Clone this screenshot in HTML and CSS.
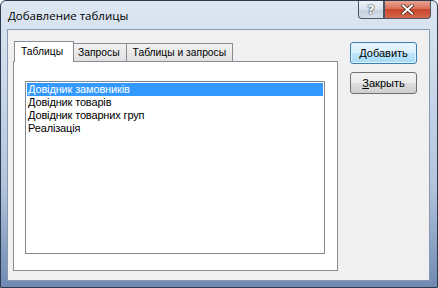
FILE: index.html
```html
<!DOCTYPE html>
<html lang="ru">
<head>
    <meta charset="UTF-8">
    <title>Добавление таблицы</title>
    <link rel="stylesheet" href="styles.css">
</head>
<body>
    <div class="window">
        <div class="titlebar">
            <span class="caption">Добавление таблицы</span>
            <div class="caption-buttons">
                <button class="help">?</button>
                <button class="close">
                    <svg width="13" height="11" viewBox="0 0 13 11">
                        <path d="M2 1.5 L11 9.5 M11 1.5 L2 9.5" stroke="#3a1a16" stroke-width="3.4" stroke-linecap="square"/>
                        <path d="M2 1.5 L11 9.5 M11 1.5 L2 9.5" stroke="#fff" stroke-width="2" stroke-linecap="square"/>
                    </svg>
                </button>
            </div>
        </div>

        <div class="client">
            <div class="tabs">
                <div class="tab-strip">
                    <div class="tab active">Таблицы</div>
                    <div class="tab">Запросы</div>
                    <div class="tab">Таблицы и запросы</div>
                </div>
                <div class="tab-panel">
                    <ul class="list">
                        <li class="selected">Довідник замовників</li>
                        <li>Довідник товарів</li>
                        <li>Довідник товарних груп</li>
                        <li>Реалізація</li>
                    </ul>
                </div>
            </div>

            <div class="actions">
                <button class="btn default">Добавить</button>
                <button class="btn"><u>З</u>акрыть</button>
            </div>
        </div>
    </div>
</body>
</html>
```

FILE: styles.css
```css
*{
    margin: 0;
    padding: 0;
    box-sizing: border-box;
}

body{
    width: 438px;
    height: 288px;
    overflow: hidden;
    background: #fff;
    font-family: "Liberation Sans", Arial, sans-serif;
}

.window{
    width: 438px;
    height: 288px;
    display: flex;
    flex-direction: column;
    border: 1px solid #2e3a4d;
    border-radius: 6px 6px 0 0;
    background: linear-gradient(to bottom, #dde7f2 0%, #ccdaea 25%, #b2c4dc 65%, #6f89b1 100%);
}

.titlebar{
    height: 28px;
    display: flex;
    justify-content: space-between;
    align-items: flex-start;
    padding-left: 7px;
}

.caption{
    margin-top: 7px;
    font-family: "Open Sans", sans-serif;
    font-size: 11.5px;
    color: #000;
}

.caption-buttons{
    display: flex;
    margin-right: 6px;
}

.caption-buttons button{
    height: 18px;
    border: 1px solid #4a5668;
    border-top: none;
    cursor: pointer;
    display: flex;
    align-items: center;
    justify-content: center;
}

.help{
    width: 26px;
    border-radius: 0 0 0 4px;
    background: linear-gradient(to bottom, #eef2f7 0%, #d9e2ec 50%, #c3d0df 51%, #d4dfeb 100%);
    font-family: "DejaVu Sans", sans-serif;
    font-weight: bold;
    font-size: 12px;
    color: #fff;
    text-shadow: 0 0 2px #333, 0 0 1px #000;
}

.close{
    width: 47px;
    border-radius: 0 0 4px 0;
    border-left: none;
    background: linear-gradient(to bottom, #e8a493 0%, #d9715a 45%, #c8462c 50%, #d5684c 100%);
}

.client{
    flex: 1;
    margin: 0 7px 6px 6px;
    background: #f0f0f0;
    border: 1px solid #8598b4;
    display: flex;
    align-items: flex-start;
    padding: 10px 12px 0 5px;
    gap: 12px;
}

.tabs{
    display: flex;
    flex-direction: column;
    font-size: 10.3px;
}

.tab-strip{
    display: flex;
    align-items: flex-end;
    height: 21px;
    padding-left: 1px;
}

.tab{
    height: 18px;
    padding: 3px 6px 0 6px;
    border: 1px solid #898c95;
    border-bottom: none;
    border-left: none;
    background: linear-gradient(to bottom, #f2f2f2, #e0e0e0);
    color: #000;
    white-space: nowrap;
}

.tab:nth-child(2){
    padding: 3px 6px 0 4px;
}

.tab.active{
    height: 21px;
    padding: 4px 10px 0 6px;
    background: #fff;
    border-left: 1px solid #898c95;
    margin-bottom: -1px;
    position: relative;
    z-index: 1;
}

.tab-panel{
    width: 325px;
    height: 210px;
    background: #fff;
    border: 1px solid #898c95;
    padding: 19px 12px 0 11px;
}

.list{
    list-style: none;
    height: 173px;
    border: 1px solid #828790;
    padding: 1px;
    background: #fff;
}

.list li{
    height: 13px;
    line-height: 13px;
    padding-left: 1px;
    font-family: "Liberation Sans", Arial, sans-serif;
    font-size: 11px;
    letter-spacing: -0.15px;
    color: #000;
    white-space: nowrap;
}

.list li.selected{
    background: #3399ff;
    color: #fff;
}

.actions{
    display: flex;
    flex-direction: column;
    gap: 8px;
    margin-top: 2px;
}

.btn{
    width: 67px;
    height: 22px;
    border: 1px solid #707070;
    border-radius: 3px;
    background: linear-gradient(to bottom, #f2f2f2 0%, #ebebeb 48%, #dddddd 52%, #cfcfcf 100%);
    font-family: "Liberation Sans", Arial, sans-serif;
    font-size: 11px;
    color: #000;
    cursor: pointer;
}

.btn u{
    text-decoration: underline;
}

.btn.default{
    border-color: #3c7fb1;
    background: linear-gradient(to bottom, #eaf6fd 0%, #d9f0fc 48%, #bee6fd 52%, #a7d9f5 100%);
    box-shadow: inset 0 0 0 1px #ddf3fd;
}
```
